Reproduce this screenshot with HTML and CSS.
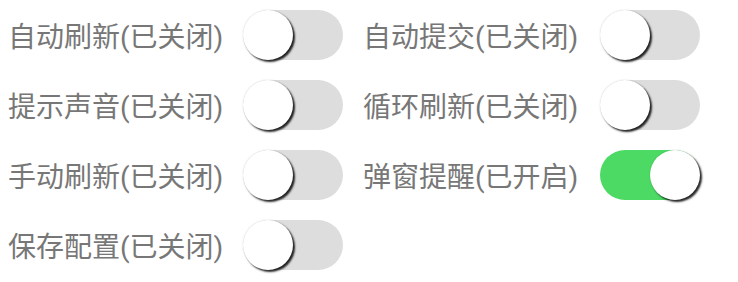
FILE: index.html
```html
<!DOCTYPE html>
<html lang="zh-CN">
<head>
<meta charset="utf-8">
<link rel="stylesheet" href="styles.css">
</head>
<body>
<div class="grid">
  <div class="item"><span class="label">自动刷新(已关闭)</span><span class="switch"><span class="knob"></span></span></div>
  <div class="item"><span class="label">自动提交(已关闭)</span><span class="switch"><span class="knob"></span></span></div>
  <div class="item"><span class="label">提示声音(已关闭)</span><span class="switch"><span class="knob"></span></span></div>
  <div class="item"><span class="label">循环刷新(已关闭)</span><span class="switch"><span class="knob"></span></span></div>
  <div class="item"><span class="label">手动刷新(已关闭)</span><span class="switch"><span class="knob"></span></span></div>
  <div class="item"><span class="label">弹窗提醒(已开启)</span><span class="switch on"><span class="knob"></span></span></div>
  <div class="item"><span class="label">保存配置(已关闭)</span><span class="switch"><span class="knob"></span></span></div>
</div>
</body>
</html>
```
FILE: styles.css
```css
html, body {
  margin: 0;
  background: #fff;
}
body {
  padding: 10px 8px;
  font-family: Roboto, "Noto Sans CJK SC", sans-serif;
}
.grid {
  display: grid;
  grid-template-columns: 335px 337px;
  column-gap: 20px;
  row-gap: 20px;
}
.item {
  display: flex;
  align-items: center;
  height: 50px;
}
.label {
  flex: 0 0 auto;
  width: 235px;
  font-size: 28px;
  color: #777;
  white-space: nowrap;
}
.item:nth-child(2n) .label {
  width: 237px;
}
.switch {
  display: flex;
  width: 100px;
  height: 50px;
  border-radius: 25px;
  background: #dddddd;
  flex: 0 0 auto;
}
.switch.on {
  background: #4cd964;
  justify-content: flex-end;
}
.knob {
  width: 50px;
  height: 50px;
  border-radius: 50%;
  background: #fff;
  box-shadow: 2px 2px 2px rgba(0,0,0,0.85), 0 0 2px rgba(0,0,0,0.15);
}
```
